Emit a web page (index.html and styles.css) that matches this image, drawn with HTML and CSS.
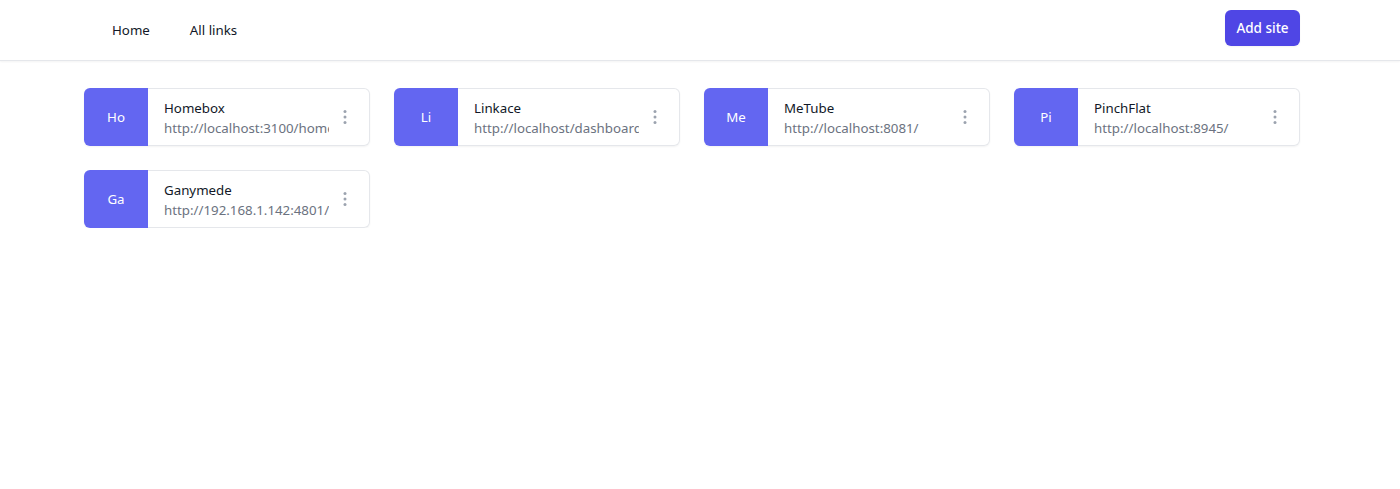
FILE: index.html
```html
<!DOCTYPE html>
<html lang="en">
<head>
<meta charset="utf-8">
<title>Links</title>
<link rel="stylesheet" href="styles.css">
</head>
<body>
<header class="topbar">
  <div class="topbar-inner">
    <nav class="nav">
      <a class="nav-link" href="#">Home</a>
      <a class="nav-link" href="#">All links</a>
    </nav>
    <button class="btn-add" type="button">Add site</button>
  </div>
</header>
<main class="content">
  <ul class="grid">
    <li class="card">
      <div class="badge">Ho</div>
      <div class="card-body">
        <div class="card-text">
          <span class="card-name">Homebox</span>
          <span class="card-url">http://localhost:3100/home</span>
        </div>
        <button class="menu-btn" type="button" aria-label="Options"><svg viewBox="0 0 20 20" width="20" height="20" fill="currentColor"><circle cx="10" cy="4.5" r="1.5"/><circle cx="10" cy="10" r="1.5"/><circle cx="10" cy="15.5" r="1.5"/></svg></button>
      </div>
    </li>
    <li class="card">
      <div class="badge">Li</div>
      <div class="card-body">
        <div class="card-text">
          <span class="card-name">Linkace</span>
          <span class="card-url">http://localhost/dashboard</span>
        </div>
        <button class="menu-btn" type="button" aria-label="Options"><svg viewBox="0 0 20 20" width="20" height="20" fill="currentColor"><circle cx="10" cy="4.5" r="1.5"/><circle cx="10" cy="10" r="1.5"/><circle cx="10" cy="15.5" r="1.5"/></svg></button>
      </div>
    </li>
    <li class="card">
      <div class="badge">Me</div>
      <div class="card-body">
        <div class="card-text">
          <span class="card-name">MeTube</span>
          <span class="card-url">http://localhost:8081/</span>
        </div>
        <button class="menu-btn" type="button" aria-label="Options"><svg viewBox="0 0 20 20" width="20" height="20" fill="currentColor"><circle cx="10" cy="4.5" r="1.5"/><circle cx="10" cy="10" r="1.5"/><circle cx="10" cy="15.5" r="1.5"/></svg></button>
      </div>
    </li>
    <li class="card">
      <div class="badge">Pi</div>
      <div class="card-body">
        <div class="card-text">
          <span class="card-name">PinchFlat</span>
          <span class="card-url">http://localhost:8945/</span>
        </div>
        <button class="menu-btn" type="button" aria-label="Options"><svg viewBox="0 0 20 20" width="20" height="20" fill="currentColor"><circle cx="10" cy="4.5" r="1.5"/><circle cx="10" cy="10" r="1.5"/><circle cx="10" cy="15.5" r="1.5"/></svg></button>
      </div>
    </li>
    <li class="card">
      <div class="badge">Ga</div>
      <div class="card-body">
        <div class="card-text">
          <span class="card-name">Ganymede</span>
          <span class="card-url">http://192.168.1.142:4801/</span>
        </div>
        <button class="menu-btn" type="button" aria-label="Options"><svg viewBox="0 0 20 20" width="20" height="20" fill="currentColor"><circle cx="10" cy="4.5" r="1.5"/><circle cx="10" cy="10" r="1.5"/><circle cx="10" cy="15.5" r="1.5"/></svg></button>
      </div>
    </li>
  </ul>
</main>
</body>
</html>
```
FILE: styles.css
```css
* { box-sizing: border-box; }
html, body { margin: 0; padding: 0; background: #fff; }
body {
  font-family: "Noto Sans", "Open Sans", Arial, sans-serif;
  font-size: 13.3px;
  color: #111827;
}
.topbar {
  height: 61px;
  border-bottom: 1px solid #e5e7eb;
  box-shadow: 0 1px 2px rgba(0,0,0,0.05);
}
.topbar-inner {
  width: 1216px;
  margin-left: 84px;
  height: 60px;
  display: flex;
  align-items: flex-start;
  justify-content: space-between;
}
.nav { display: flex; gap: 40px; padding-left: 28px; padding-top: 20px; }
.nav-link {
  color: #111827;
  text-decoration: none;
  line-height: 20px;
}
.btn-add {
  font-family: inherit;
  margin-top: 10px;
  background: #4f46e5;
  color: #fff;
  border: 0;
  border-radius: 6px;
  height: 36px;
  width: 75px;
  padding: 0;
  font-size: 13.5px;
  font-weight: 500;
  box-shadow: 0 1px 2px rgba(0,0,0,0.05);
}
.content { margin-left: 84px; width: 1216px; padding-top: 27px; }
.grid {
  list-style: none;
  margin: 0;
  padding: 0;
  display: grid;
  grid-template-columns: repeat(4, minmax(0, 1fr));
  gap: 24px;
}
.card {
  display: flex;
  height: 58px;
  min-width: 0;
  border-radius: 6px;
  box-shadow: 0 1px 2px rgba(0,0,0,0.05);
}
.badge {
  flex: 0 0 64px;
  display: flex;
  align-items: center;
  justify-content: center;
  background: #6366f1;
  color: #fff;
  border-radius: 6px 0 0 6px;
}
.card-body {
  flex: 1;
  min-width: 0;
  display: flex;
  align-items: center;
  justify-content: space-between;
  border: 1px solid #e5e7eb;
  border-left: 0;
  border-radius: 0 6px 6px 0;
  background: #fff;
}
.card-text {
  flex: 1;
  min-width: 0;
  overflow: hidden;
  white-space: nowrap;
  padding: 2px 0 0 16px;
  display: flex;
  flex-direction: column;
}
.card-name { color: #111827; line-height: 20px; }
.card-url { color: #6b7280; line-height: 20px; }
.menu-btn {
  flex: 0 0 32px;
  width: 32px;
  height: 32px;
  margin-right: 8px;
  display: flex;
  align-items: center;
  justify-content: center;
  background: transparent;
  border: 0;
  padding: 0;
  color: #9ca3af;
}
```
